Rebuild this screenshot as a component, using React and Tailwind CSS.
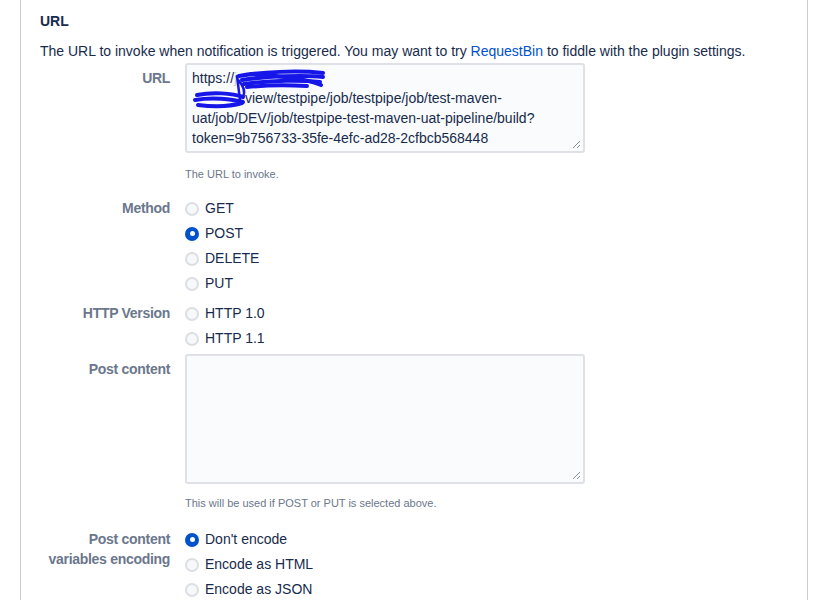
import { useState } from 'react'

const font = { fontFamily: '"Liberation Sans", Arial, sans-serif' }

function Radio({ checked, label, onClick }) {
  return (
    <button type="button" onClick={onClick} className="flex h-[25px] items-center text-left">
      {checked ? (
        <span className="flex h-[14px] w-[14px] items-center justify-center rounded-full bg-[#0052cc]">
          <span className="h-[5px] w-[5px] rounded-full bg-white" />
        </span>
      ) : (
        <span className="h-[14px] w-[14px] rounded-full border-2 border-[#dcdfe4] bg-[#f7f8f9]" />
      )}
      <span className="ml-[6px] text-[14px] text-[#172b4d]">{label}</span>
    </button>
  )
}

function RadioGroup({ options, initial }) {
  const [value, setValue] = useState(initial)
  return (
    <div className="flex flex-col">
      {options.map(o => (
        <Radio key={o} label={o} checked={value === o} onClick={() => setValue(o)} />
      ))}
    </div>
  )
}

function Grip() {
  return (
    <svg className="absolute bottom-[2px] right-[2px]" width="9" height="9" viewBox="0 0 9 9">
      <path d="M8 1 L1 8 M8 5 L5 8" stroke="#8a8f98" strokeWidth="1" />
    </svg>
  )
}

// the blue marker that hides the host name
function Scribble() {
  return (
    <svg className="pointer-events-none absolute left-0 top-0" width="160" height="50" viewBox="0 0 160 50">
      <g fill="none" stroke="#1616e8" strokeLinecap="round" strokeWidth="4">
        <path d="M52 11 C75 7, 110 5, 136 8" />
        <path d="M55 15 C80 11, 118 10, 136 12" />
        <path d="M57 19 C85 15, 115 15, 133 17" />
        <path d="M60 22 C80 20, 100 20, 120 21" />
        <path d="M64 9 C90 11, 118 13, 134 20" />
        <path d="M50 11 L53 35" strokeWidth="2.5" />
        <path d="M10 30 C25 27, 45 28, 56 32" />
        <path d="M8 35 C25 32, 45 34, 56 37" />
        <path d="M11 40 C28 42, 45 41, 55 38" />
        <path d="M56 33 C59 26, 56 20, 51 15" strokeWidth="2.5" />
      </g>
    </svg>
  )
}

function Field({ label, children }) {
  return (
    <div className="flex">
      <div className="w-[165px] shrink-0 pr-[15px] pt-[5px] text-right text-[14px] font-bold leading-5 tracking-[-0.3px] text-[#6b778c]">
        {label}
      </div>
      <div className="flex-1">{children}</div>
    </div>
  )
}

export default function App() {
  return (
    <div className="min-h-[600px] bg-white text-[#172b4d]" style={font}>
      <div className="mx-[20px] h-[600px] w-[788px] overflow-hidden border-x border-[#cccccc] pl-[19px] pt-[11px]">
        <h3 className="text-[14px] font-bold leading-5">URL</h3>
        <p className="mt-[10px] text-[14px] leading-5">
          The URL to invoke when notification is triggered. You may want to try{' '}
          <a href="#" className="text-[#0052cc]">RequestBin</a> to fiddle with the plugin settings.
        </p>

        <div className="-ml-[20px] mt-[2px]">
          <Field label="URL">
            <div className="relative h-[90px] w-[400px] rounded-[3px] border-2 border-[#dfe1e6] bg-[#fafbfc] px-[5px] pt-[3px] text-[14px] leading-5 text-[#172b4d]">
              <div>https://<span className="text-[#c8cbd2]">jen</span></div>
              <div><span className="inline-block w-[53px]" />view/testpipe/job/testpipe/job/test-maven-</div>
              <div>uat/job/DEV/job/testpipe-test-maven-uat-pipeline/build?</div>
              <div>token=9b756733-35fe-4efc-ad28-2cfbcb568448</div>
              <Scribble />
              <Grip />
            </div>
            <p className="mt-[13px] text-[11px] leading-4 text-[#6b778c]">The URL to invoke.</p>
          </Field>

          <div className="mt-[14px]">
            <Field label={<span className="-mt-[3px] block">Method</span>}>
              <RadioGroup options={['GET', 'POST', 'DELETE', 'PUT']} initial="POST" />
            </Field>
          </div>

          <div className="mt-[5px]">
            <Field label={<span className="-mt-[3px] block">HTTP Version</span>}>
              <RadioGroup options={['HTTP 1.0', 'HTTP 1.1']} initial="" />
            </Field>
          </div>

          <div className="mt-[3px]">
            <Field label="Post content">
              <div className="relative h-[130px] w-[400px] rounded-[3px] border-2 border-[#dfe1e6] bg-[#fafbfc]">
                <Grip />
              </div>
              <p className="mt-[11px] text-[11px] leading-4 text-[#6b778c]">
                This will be used if POST or PUT is selected above.
              </p>
            </Field>
          </div>

          <div className="mt-[16px]">
            <Field label={<span className="-mt-[3px] block">Post content<br />variables encoding</span>}>
              <RadioGroup options={["Don't encode", 'Encode as HTML', 'Encode as JSON']} initial="Don't encode" />
            </Field>
          </div>
        </div>
      </div>
    </div>
  )
}
